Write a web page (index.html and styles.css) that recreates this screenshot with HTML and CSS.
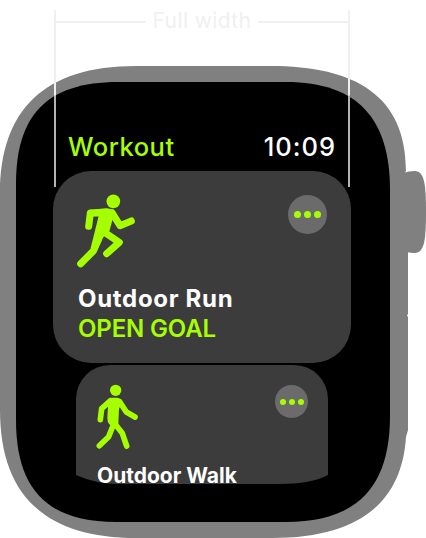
FILE: index.html
```html
<!DOCTYPE html>
<html lang="en">
<head>
<meta charset="utf-8">
<title>Workout</title>
<link rel="stylesheet" href="styles.css">
</head>
<body>
<main class="watch">
  <svg class="shell" viewBox="0 0 426 538" aria-hidden="true">
    <path fill="#808080" d="M404 173Q408 171 415 171C424 172 426 182 426 212S424 252 415 253Q410 253.500 404 251Z"/>
    <path fill="#808080" d="M136 66H270C356 66 406 96 406 171L405 172.500 407 174L408 250V314L407 315.500 408 317V430L406 437C402 500 362 538 272 538H136C44 538 0 494 0 410V194C0 110 44 66 136 66Z"/>
    <path d="M118 82H286C358 82 390 119 390 190V416C390 486 358 522 286 522H116C46 522 16 488 16 420V184C16 116 46 82 118 82Z"/>
  </svg>
  <div class="dimension">
    <span class="rule"></span>
    <span class="dimension-label">Full width</span>
    <span class="rule"></span>
  </div>
  <section class="screen">
    <header class="status">
      <span class="title">Workout</span>
      <time class="time">10:09</time>
    </header>
    <article class="card">
      <div class="card-top">
        <svg class="runner" viewBox="0 0 180 222" aria-hidden="true">
          <g transform="translate(-78 -87)">
            <circle cx="190" cy="109" r="20.500"/>
            <path class="body" d="M120 134L168 130Q184 130 193 142L184 178 178 199 160 217 140 258 122 249 146 153 120 154Z"/>
            <path class="limb" d="M116 184L121 144H170M186 143L210 182 244 168M165 203L208 232 170 266M145 224L130 258 92 296"/>
          </g>
        </svg>
        <span class="more"><i></i><i></i><i></i></span>
      </div>
      <h2 class="name">Outdoor Run</h2>
      <p class="goal">OPEN GOAL</p>
    </article>
    <article class="card card-next">
      <div class="card-top">
        <svg class="walker" viewBox="0 0 126 198" aria-hidden="true">
          <g transform="translate(-109 -86)">
            <circle cx="168" cy="105" r="17"/>
            <path class="body" d="M151 127H173Q183 128 189 140L178 160 176 207 165 218 149 207Q143 201 143 188L145 153 137 141Z"/>
            <path class="limb thin" d="M122 193L126 160 151 137M180 139L200 170 226 185M162 206L147 244 119 271M166 206L188 234 201 272"/>
          </g>
        </svg>
        <span class="more"><i></i><i></i><i></i></span>
      </div>
      <h2 class="name">Outdoor Walk</h2>
    </article>
  </section>
</main>
</body>
</html>
```

FILE: styles.css
```css
* { box-sizing: border-box; }
body {
  margin: 0;
  background: #fff;
  font-family: Inter, "Liberation Sans", sans-serif;
}
h2, p { margin: 0; }
.watch {
  position: relative;
  width: 426px;
  height: 538px;
  overflow: hidden;
}
.shell {
  position: absolute;
  inset: 0;
  width: 426px;
  height: 538px;
}
.dimension {
  position: absolute;
  z-index: 2;
  left: 54px;
  top: 10px;
  width: 296px;
  height: 177px;
  display: flex;
  align-items: flex-start;
  justify-content: space-between;
  border: solid #f0f0f0;
  border-width: 0 2px;
  border-image: linear-gradient(#f0f0f0 0 85px, #b3b3b3 86px) 0 2;
}
.rule {
  width: 90px;
  height: 2px;
  margin-top: 11px;
  background: #f0f0f0;
}
.dimension-label {
  color: #f0f0f0;
  font-size: 21px;
  line-height: 22px;
  letter-spacing: 0.4px;
  white-space: nowrap;
}
.screen {
  position: relative;
  width: 298px;
  height: 484px;
  margin-left: 53px;
  padding-top: 131px;
  overflow: hidden;
}
.status {
  display: flex;
  justify-content: space-between;
  height: 40px;
  padding: 0 15px;
  font-size: 25.5px;
  line-height: 32px;
  font-weight: 500;
  white-space: nowrap;
}
.title { color: #a6ff00; letter-spacing: 0.5px; }
.time { color: #fff; line-height: 31px; letter-spacing: 1px; }
.card {
  height: 192px;
  padding: 23px 24px 0 25px;
  border-radius: 38px;
  background: #3c3c3c;
}
.card-top {
  display: flex;
  align-items: flex-start;
  justify-content: space-between;
  height: 90px;
}
.runner { width: 60px; height: 74px; margin-left: -2px; fill: #a6ff00; }
.walker { width: 42px; height: 66px; fill: #a6ff00; }
.limb {
  fill: none;
  stroke: #a6ff00;
  stroke-width: 21;
  stroke-linecap: round;
  stroke-linejoin: round;
}
.thin { stroke-width: 17; }
.more {
  display: flex;
  align-items: center;
  justify-content: center;
  gap: 3px;
  width: 39px;
  height: 39px;
  margin-top: 1px;
  border-radius: 50%;
  background: #6b6b6b;
}
.more i {
  width: 7px;
  height: 7px;
  border-radius: 50%;
  background: #a6ff00;
}
.name, .goal {
  font-size: 24px;
  line-height: 30px;
  font-weight: 600;
  white-space: nowrap;
}
.name { color: #fff; font-weight: 650; letter-spacing: 0.7px; }
.goal { color: #a6ff00; letter-spacing: -0.15px; }
.card-next {
  width: 252px;
  height: 119px;
  margin: 2px auto 0;
  padding: 19px 20px 0;
  border-radius: 34px 34px 0 0;
  clip-path: path("M0 0H252V110Q235 119 204 119H42Q20 119 0 110Z");
}
.card-next .card-top { height: 78px; }
.card-next .more { width: 33px; height: 33px; margin-top: 1px; }
.card-next .more i { width: 6px; height: 6px; }
.card-next .name {
  padding-left: 1px;
  font-size: 21px;
  line-height: 28px;
  letter-spacing: 0;
}
```
